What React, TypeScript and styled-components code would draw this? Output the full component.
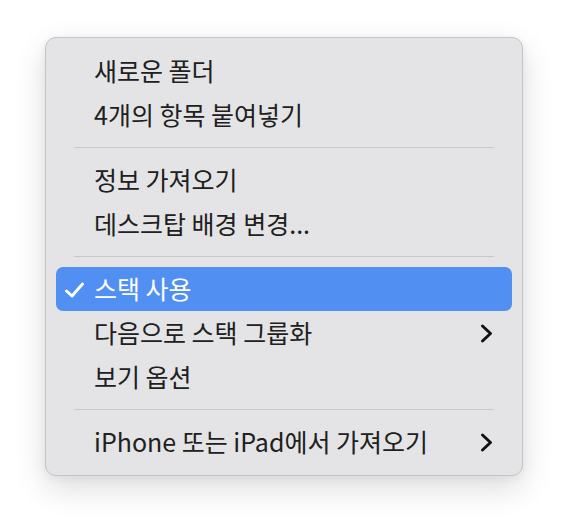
import React from "react";
import styled, { createGlobalStyle } from "styled-components";

const Global = createGlobalStyle`
  html, body { margin: 0; padding: 0; background: #ffffff; }
  body { font-family: "Noto Sans CJK KR", "Noto Sans", sans-serif; }
`;

const Page = styled.div`
  width: 568px;
  height: 530px;
  padding: 37px 0 0 45px;
  box-sizing: border-box;
`;

const Menu = styled.div`
  width: 478px;
  box-sizing: border-box;
  background: #e4e4e6;
  border: 1px solid #c4c4c6;
  border-radius: 11px;
  padding: 11px 10px 11px;
  box-shadow: 0 12px 32px rgba(0, 0, 0, 0.14), 0 2px 8px rgba(0, 0, 0, 0.06);
  display: flex;
  flex-direction: column;
`;

const Row = styled.div<{ $active?: boolean }>`
  height: 44px;
  display: flex;
  align-items: center;
  position: relative;
  padding: 0 19px 0 38px;
  border-radius: 7px;
  background: ${(p) => (p.$active ? "#528ff3" : "transparent")};
  color: ${(p) => (p.$active ? "#ffffff" : "#202020")};
  font-size: 25px;
  line-height: 1;
`;

const Label = styled.span`
  flex: 1;
  white-space: nowrap;
  position: relative;
  top: -1px;
`;

const Check = styled.svg`
  position: absolute;
  left: 8px;
  top: 15px;
`;

const Sep = styled.div`
  height: 21px;
  display: flex;
  align-items: center;
  padding: 0 18px;
  &::after {
    content: "";
    flex: 1;
    height: 1.5px;
    background: #c8c8ca;
  }
`;

const Chevron = () => (
  <svg width="13" height="19" viewBox="0 0 13 19">
    <path d="M2.5 2 L10.5 9.5 L2.5 17" fill="none" stroke="#111" strokeWidth="2.9" strokeLinecap="round" strokeLinejoin="round" />
  </svg>
);

type Item = { label: string; active?: boolean; sub?: boolean } | "sep";

const items: Item[] = [
  { label: "새로운 폴더" },
  { label: "4개의 항목 붙여넣기" },
  "sep",
  { label: "정보 가져오기" },
  { label: "데스크탑 배경 변경..." },
  "sep",
  { label: "스택 사용", active: true },
  { label: "다음으로 스택 그룹화", sub: true },
  { label: "보기 옵션" },
  "sep",
  { label: "iPhone 또는 iPad에서 가져오기", sub: true },
];

export default function App() {
  return (
    <Page>
      <Global />
      <Menu>
        {items.map((it, i) =>
          it === "sep" ? (
            <Sep key={i} />
          ) : (
            <Row key={i} $active={it.active}>
              {it.active && (
                <Check width="21" height="16" viewBox="0 0 21 16">
                  <path d="M2.5 9 L8 14 L18.5 2" fill="none" stroke="#fff" strokeWidth="2.9" strokeLinecap="round" strokeLinejoin="round" />
                </Check>
              )}
              <Label>{it.label}</Label>
              {it.sub && <Chevron />}
            </Row>
          )
        )}
      </Menu>
    </Page>
  );
}
